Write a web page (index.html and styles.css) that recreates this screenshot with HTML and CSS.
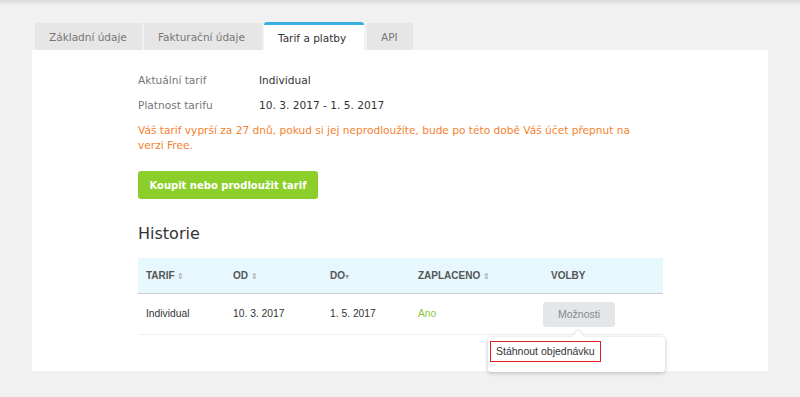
FILE: index.html
```html
<!DOCTYPE html>
<html lang="cs">
<head>
    <meta charset="utf-8">
    <title>Tarif a platby</title>
    <link rel="stylesheet" href="styles.css">
</head>
<body>
    <div class="topbar"></div>
    <div class="wrap">
        <nav class="tabs">
            <a class="tab">Základní údaje</a>
            <a class="tab">Fakturační údaje</a>
            <a class="tab aktivni">Tarif a platby</a>
            <a class="tab">API</a>
        </nav>
        <section class="panel">
            <dl class="info">
                <dt>Aktuální tarif</dt>
                <dd>Individual</dd>
                <dt>Platnost tarifu</dt>
                <dd>10. 3. 2017 - 1. 5. 2017</dd>
            </dl>
            <p class="varovani">Váš tarif vyprší za 27 dnů, pokud si jej neprodloužíte, bude po této době Váš účet přepnut na verzi Free.</p>
            <button class="koupit">Koupit nebo prodloužit tarif</button>
            <h2>Historie</h2>
            <table class="historie">
                <thead>
                    <tr>
                        <th class="c1">TARIF <span class="sort">&#8661;</span></th>
                        <th class="c2">OD <span class="sort">&#8661;</span></th>
                        <th class="c3">DO<span class="sort-down">&#9662;</span></th>
                        <th class="c4">ZAPLACENO <span class="sort">&#8661;</span></th>
                        <th class="c5">VOLBY</th>
                    </tr>
                </thead>
                <tbody>
                    <tr>
                        <td>Individual</td>
                        <td>10. 3. 2017</td>
                        <td>1. 5. 2017</td>
                        <td class="ano">Ano</td>
                        <td class="volby">
                            <button class="moznosti">Možnosti</button>
                            <div class="dropdown">
                                <a class="polozka">Stáhnout objednávku</a>
                            </div>
                        </td>
                    </tr>
                </tbody>
            </table>
        </section>
    </div>
</body>
</html>
```

FILE: styles.css
```css
* {
    box-sizing: border-box;
}

body {
    margin: 0;
    background-color: #f1f1f1;
    font-family: "DejaVu Sans", Verdana, sans-serif;
    font-size: 10.6px;
    color: #444;
    height: 397px;
    overflow: hidden;
}

.topbar {
    height: 6px;
    background: linear-gradient(#dcdcdc, #f1f1f1);
}

.wrap {
    margin: 0 32px;
    padding-top: 16px;
}

/* Zalozky */
.tabs {
    display: flex;
    gap: 2px;
    padding-left: 3px;
    height: 28px;
    align-items: flex-end;
}

.tab {
    display: block;
    height: 27px;
    line-height: 28px;
    padding: 0 14px;
    background-color: #e6e6e6;
    color: #777;
    font-size: 10.5px;
}

.tab:nth-child(1) { width: 107px; }
.tab:nth-child(2) { width: 118px; }
.tab:nth-child(4) { width: 46px; margin-left: 1px; }

.aktivni {
    width: 100px;
    height: 28px;
    background-color: #fff;
    color: #333;
    border-top: 3px solid #38aee0;
    border-radius: 3px 3px 0 0;
    line-height: 26px;
}

.panel {
    background-color: #fff;
    height: 321px;
    padding: 24px 106px 0;
}

/* Info */
.info {
    display: grid;
    grid-template-columns: 121px auto;
    row-gap: 12px;
    margin: 0;
    line-height: 13px;
}

.info dt {
    color: #777;
}

.info dd {
    margin: 0;
    color: #333;
}

.varovani {
    color: #f5822f;
    line-height: 15px;
    margin: 11px 0 0;
    width: 505px;
}

.koupit {
    margin-top: 18px;
    width: 180px;
    height: 28px;
    background-color: #8ccf2a;
    border: none;
    border-radius: 3px;
    color: #fff;
    font-family: "DejaVu Sans", Verdana, sans-serif;
    font-size: 10px;
    font-weight: bold;
}

h2 {
    font-family: "DejaVu Sans", Verdana, sans-serif;
    font-weight: normal;
    font-size: 16px;
    line-height: 20px;
    color: #333;
    margin: 25px 0 14px;
}

/* Tabulka */
.historie {
    width: 525px;
    border-collapse: collapse;
    font-family: "Liberation Sans", Arial, sans-serif;
    font-size: 10.3px;
}

.historie th {
    background-color: #e6f8fd;
    height: 35px;
    text-align: left;
    color: #555;
    font-size: 10px;
    font-weight: bold;
    border-bottom: 1px solid #c9ced1;
    padding: 0 0 0 8px;
}

.c1 { width: 87px; }
.c2 { width: 97px; }
.c3 { width: 88px; }
.c4 { width: 133px; }

.sort,
.sort-down {
    color: #999;
    font-size: 8px;
    font-weight: normal;
}

.historie td {
    height: 41px;
    padding: 0 0 0 8px;
    color: #333;
    border-bottom: 1px solid #f0f0f0;
}

.historie .ano {
    color: #8cc63f;
}

.volby {
    position: relative;
}

.moznosti {
    width: 72px;
    height: 25px;
    margin-left: -8px;
    margin-top: 1px;
    background-color: #e4e7ea;
    border: none;
    border-radius: 3px;
    color: #888;
    font-family: "Liberation Sans", Arial, sans-serif;
    font-size: 10.5px;
}

.dropdown {
    position: absolute;
    top: 43px;
    left: -55px;
    width: 177px;
    height: 35px;
    background-color: #fff;
    border-radius: 3px;
    box-shadow: 0 1px 4px rgba(0, 0, 0, 0.25);
    padding: 4px 2px;
}

.dropdown::before {
    content: "";
    position: absolute;
    top: -5px;
    left: 86px;
    width: 8px;
    height: 8px;
    background-color: #fff;
    transform: rotate(45deg);
    box-shadow: -1px -1px 2px rgba(0, 0, 0, 0.12);
}

.polozka {
    position: relative;
    display: block;
    width: 111px;
    height: 21px;
    line-height: 19px;
    padding-left: 5px;
    border: 1px solid #e02020;
    color: #333;
    font-size: 10.5px;
    white-space: nowrap;
}
```
